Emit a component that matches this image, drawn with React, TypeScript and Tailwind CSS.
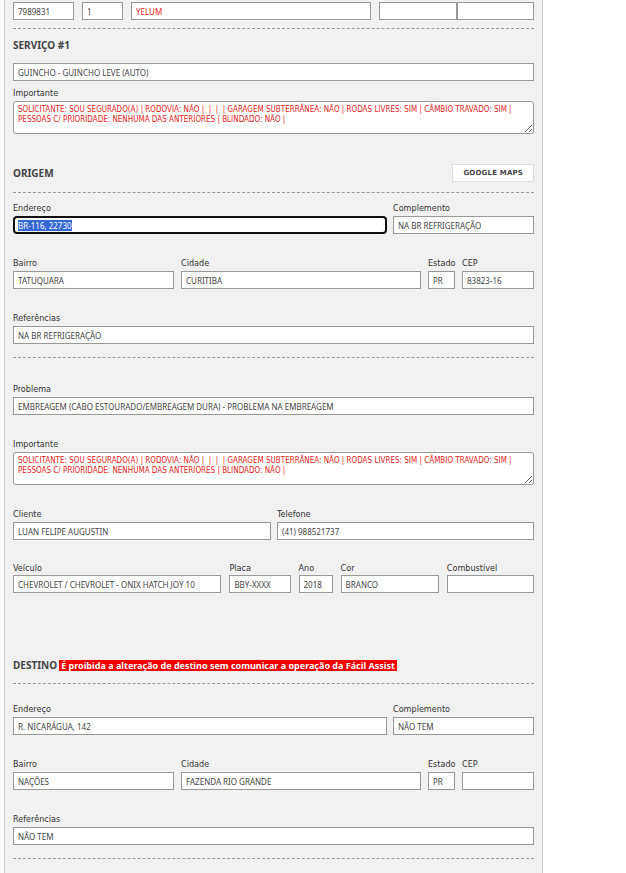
import { useEffect, useRef } from "react";
import type { ReactNode, RefObject } from "react";

interface FieldProps {
  id: string;
  label: string;
  value?: string;
  compact?: boolean;
  inputRef?: RefObject<HTMLInputElement | null>;
}

const inputClass =
  "block h-[18px] w-full min-w-0 border border-[#999] bg-white px-1 font-['Noto_Sans',sans-serif] text-[8px] outline-none selection:bg-[#3367d1] selection:text-white focus:rounded focus:border-2 focus:border-[#101010] focus:px-[3px]";

const Label = ({ id, compact, children }: { id: string; compact?: boolean; children: ReactNode }) => (
  <label
    htmlFor={id}
    className={`block whitespace-nowrap text-[9px] text-[#333] ${compact ? "h-[14px] leading-[14px]" : "h-4 leading-4"}`}
  >
    {children}
  </label>
);

const Field = ({ id, label, value = "", compact, inputRef }: FieldProps) => (
  <div className="min-w-0">
    <Label id={id} compact={compact}>{label}</Label>
    <input id={id} ref={inputRef} type="text" defaultValue={value} className={`${inputClass} text-[#444]`} />
  </div>
);

const important =
  "SOLICITANTE: SOU SEGURADO(A) | RODOVIA: NÃO |  |  |  | GARAGEM SUBTERRÂNEA: NÃO | RODAS LIVRES: SIM | CÂMBIO TRAVADO: SIM | PESSOAS C/ PRIORIDADE: NENHUMA DAS ANTERIORES | BLINDADO: NÃO |";

const ImportantField = ({ id }: { id: string }) => (
  <div>
    <Label id={id}>Importante</Label>
    <textarea
      id={id}
      defaultValue={important}
      className="block h-[33px] w-full resize overflow-hidden rounded-[3px] border border-[#999] bg-white px-1 py-[3px] text-[8px] leading-[10px] text-[#e81c1c] outline-none"
    />
  </div>
);

const Divider = ({ className }: { className: string }) => (
  <hr className={`border-0 border-t border-dashed border-[#999] ${className}`} />
);

const Title = ({ children }: { children: ReactNode }) => (
  <h2 className="font-['Noto_Sans',sans-serif] text-[10px] font-bold leading-4 text-[#444]">{children}</h2>
);

interface AddressProps {
  prefix: string;
  street: string;
  complement: string;
  district: string;
  city: string;
  state: string;
  zip?: string;
  references: string;
  streetRef?: RefObject<HTMLInputElement | null>;
}

const AddressFields = ({ prefix, street, complement, district, city, state, zip, references, streetRef }: AddressProps) => (
  <div className="flex flex-col gap-[21px]">
    <div className="grid grid-cols-[374fr_141fr] gap-[6px]">
      <Field id={`${prefix}-endereco`} label="Endereço" value={street} inputRef={streetRef} />
      <Field id={`${prefix}-complemento`} label="Complemento" value={complement} />
    </div>
    <div className="grid grid-cols-[161fr_240fr_27fr_72fr] gap-[7px]">
      <Field id={`${prefix}-bairro`} label="Bairro" value={district} />
      <Field id={`${prefix}-cidade`} label="Cidade" value={city} />
      <Field id={`${prefix}-estado`} label="Estado" value={state} />
      <Field id={`${prefix}-cep`} label="CEP" value={zip} />
    </div>
    <Field id={`${prefix}-referencias`} label="Referências" value={references} />
  </div>
);

export default function App() {
  const streetRef = useRef<HTMLInputElement>(null);

  useEffect(() => {
    streetRef.current?.focus({ preventScroll: true });
    streetRef.current?.select();
  }, []);

  return (
    <div className="flex min-h-screen bg-white font-['DejaVu_Sans_Condensed','DejaVu_Sans',sans-serif]">
      <form className="ml-1 mr-[83px] min-w-0 flex-1 border-x border-[#ccc] bg-[#f1f1f1] px-2 pt-[2px]">
        <div className="grid grid-cols-[61fr_41fr_240fr_155fr] gap-2">
          <input aria-label="Código" type="text" defaultValue="7989831" className={`${inputClass} text-[#444]`} />
          <input aria-label="Serviço" type="text" defaultValue="1" className={`${inputClass} text-[#444]`} />
          <input aria-label="Seguradora" type="text" defaultValue="YELUM" className={`${inputClass} text-[#e81c1c]`} />
          <div className="grid grid-cols-2">
            <input aria-label="Data" type="text" className={inputClass} />
            <input aria-label="Hora" type="text" className={inputClass} />
          </div>
        </div>
        <Divider className="mt-2" />

        <div className="mt-2">
          <Title>SERVIÇO #1</Title>
        </div>
        <input
          aria-label="Serviço solicitado"
          type="text"
          defaultValue="GUINCHO - GUINCHO LEVE (AUTO)"
          className={`mt-[10px] mb-1 text-[#444] ${inputClass}`}
        />
        <ImportantField id="servico-importante" />

        <div className="mt-[30px] flex items-center justify-between">
          <Title>ORIGEM</Title>
          <button
            type="button"
            className="h-[18px] border border-[#ddd] bg-white px-[10px] font-['DejaVu_Sans',sans-serif] text-[7px] font-bold tracking-wide text-[#444]"
          >
            GOOGLE MAPS
          </button>
        </div>
        <Divider className="mt-[10px] mb-[7px]" />
        <AddressFields
          prefix="origem"
          street="BR-116, 22730"
          complement="NA BR REFRIGERAÇÃO"
          district="TATUQUARA"
          city="CURITIBA"
          state="PR"
          zip="83823-16"
          references="NA BR REFRIGERAÇÃO"
          streetRef={streetRef}
        />
        <Divider className="mt-[13px] mb-[23px]" />

        <div className="flex flex-col gap-[21px]">
          <Field
            id="problema"
            label="Problema"
            value="EMBREAGEM (CABO ESTOURADO/EMBREAGEM DURA) - PROBLEMA NA EMBREAGEM"
          />
          <ImportantField id="problema-importante" />
          <div className="grid grid-cols-[258fr_257fr] gap-[6px]">
            <Field id="cliente" label="Cliente" value="LUAN FELIPE AUGUSTIN" />
            <Field id="telefone" label="Telefone" value="(41) 988521737" />
          </div>
          <div className="grid grid-cols-[208fr_61fr_34fr_98fr_87fr] gap-2">
            <Field id="veiculo" label="Veículo" value="CHEVROLET / CHEVROLET - ONIX HATCH JOY 10" compact />
            <Field id="placa" label="Placa" value="BBY-XXXX" compact />
            <Field id="ano" label="Ano" value="2018" compact />
            <Field id="cor" label="Cor" value="BRANCO" compact />
            <Field id="combustivel" label="Combustível" compact />
          </div>
        </div>

        <div className="mt-16 flex items-center gap-[2px]">
          <Title>DESTINO</Title>
          <strong className="whitespace-nowrap bg-[#f00000] px-[2px] font-['Noto_Sans',sans-serif] text-[9px] leading-[11px] text-white">
            É proibida a alteração de destino sem comunicar a operação da Fácil Assist
          </strong>
        </div>
        <Divider className="mt-[10px] mb-[17px]" />
        <AddressFields
          prefix="destino"
          street="R. NICARÁGUA, 142"
          complement="NÃO TEM"
          district="NAÇÕES"
          city="FAZENDA RIO GRANDE"
          state="PR"
          references="NÃO TEM"
        />
        <Divider className="mt-[13px]" />
      </form>
    </div>
  );
}
